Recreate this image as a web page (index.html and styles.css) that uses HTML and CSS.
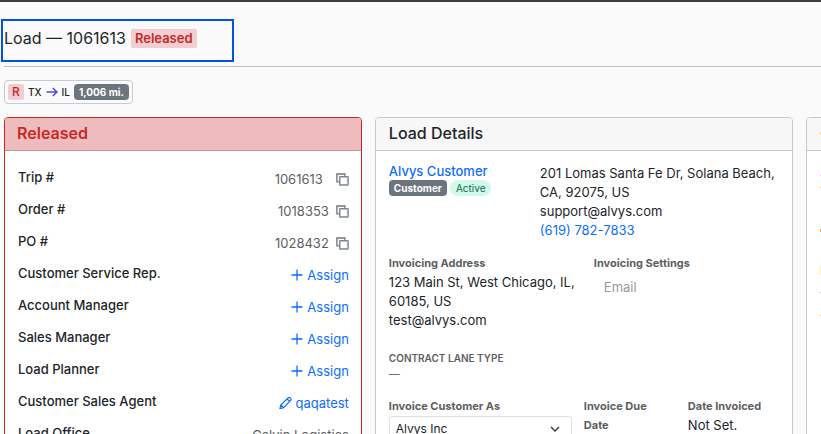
FILE: index.html
```html
<!DOCTYPE html>
<html lang="en">
<head>
  <meta charset="UTF-8" />
  <meta name="viewport" content="width=device-width, initial-scale=1" />
  <title>Load 1061613</title>
  <link rel="stylesheet" href="styles.css">
</head>
<body>
  <svg class="sprite" aria-hidden="true">
    <symbol id="icon-copy" viewBox="0 0 14 14">
      <path d="M3 9.5H1V1h8.5v2" fill="none" stroke="#6c757d" stroke-width="1.5" />
      <rect x="4" y="4" width="9" height="9" rx="0.6" fill="none" stroke="#7e868d" stroke-width="1.6" />
    </symbol>
    <symbol id="icon-plus" viewBox="0 0 12 12">
      <path d="M6 0.5v11M0.5 6h11" fill="none" stroke="currentColor" stroke-width="1.3" />
    </symbol>
    <symbol id="icon-pencil" viewBox="0 0 14 14">
      <path d="M1 13l1-4L10 1.4q.8-.8 1.7 0l.9.9q.8.8 0 1.7L5 12zM8.7 2.7l2.7 2.7M2 9l3 3" fill="none" stroke="currentColor" stroke-width="1.3" stroke-linejoin="round" />
    </symbol>
  </svg>

  <header class="page-header">
    <div class="title-box">
      <h1>Load — 1061613</h1>
      <span class="status">Released</span>
    </div>
  </header>

  <main>
    <div class="route">
      <span class="route-status">R</span>
      <span>TX</span>
      <svg class="arrow" viewBox="0 0 12 10" width="12" height="10"><path d="M0.5 5H11M6.8 1L11 5 6.8 9" fill="none" stroke="#4f46e5" stroke-width="1.5" /></svg>
      <span>IL</span>
      <span class="badge">1,006 mi.</span>
    </div>

    <div class="cards">
      <section class="card released">
        <h2>Released</h2>
        <dl class="info">
          <div><dt>Trip #</dt><dd><span class="trip">1061613</span><button class="copy" aria-label="Copy trip number"><svg><use href="#icon-copy" /></svg></button></dd></div>
          <div><dt>Order #</dt><dd>1018353<button class="copy" aria-label="Copy order number"><svg><use href="#icon-copy" /></svg></button></dd></div>
          <div><dt>PO #</dt><dd>1028432<button class="copy" aria-label="Copy PO number"><svg><use href="#icon-copy" /></svg></button></dd></div>
          <div><dt>Customer Service Rep.</dt><dd><a href="#"><svg class="plus"><use href="#icon-plus" /></svg>Assign</a></dd></div>
          <div><dt>Account Manager</dt><dd><a href="#"><svg class="plus"><use href="#icon-plus" /></svg>Assign</a></dd></div>
          <div><dt>Sales Manager</dt><dd><a href="#"><svg class="plus"><use href="#icon-plus" /></svg>Assign</a></dd></div>
          <div><dt>Load Planner</dt><dd><a href="#"><svg class="plus"><use href="#icon-plus" /></svg>Assign</a></dd></div>
          <div><dt>Customer Sales Agent</dt><dd><a href="#"><svg class="pencil"><use href="#icon-pencil" /></svg>qaqatest</a></dd></div>
          <div><dt>Load Office</dt><dd>Calvin Logistics</dd></div>
        </dl>
      </section>

      <section class="card details">
        <h2>Load Details</h2>
        <div class="card-body">
          <div class="customer">
            <div>
              <a class="customer-name" href="#">Alvys Customer</a>
              <div class="tags">
                <span class="badge">Customer</span>
                <span class="active">Active</span>
              </div>
            </div>
            <address>
              201 Lomas Santa Fe Dr, Solana Beach, CA, 92075, US<br>
              support@alvys.com<br>
              <a href="tel:6197827833">(619) 782-7833</a>
            </address>
          </div>

          <div class="invoicing">
            <div>
              <h3>Invoicing Address</h3>
              <p>123 Main St, West Chicago, IL, 60185, US<br>test@alvys.com</p>
            </div>
            <div>
              <h3>Invoicing Settings</h3>
              <p class="email">Email</p>
            </div>
          </div>

          <div class="lane">
            <h3>CONTRACT LANE TYPE</h3>
            <p>—</p>
          </div>

          <div class="invoice">
            <div>
              <label for="invoice-as">Invoice Customer As</label>
              <div class="select-wrap">
                <select id="invoice-as"><option>Alvys Inc</option></select>
                <svg viewBox="0 0 10 6"><path d="M1 1l4 4 4-4" fill="none" stroke="#343a40" stroke-width="1.4" /></svg>
              </div>
            </div>
            <div class="due">
              <h3>Invoice Due Date</h3>
            </div>
            <div>
              <h3>Date Invoiced</h3>
              <p>Not Set.</p>
            </div>
          </div>
        </div>
      </section>

      <section class="card activity">
        <div class="activity-head"><i class="mark yellow"></i></div>
        <div class="activity-body">
          <i class="mark pink"></i>
          <i class="mark orange"></i>
          <i class="mark amber"></i>
          <i class="mark lemon"></i>
          <i class="mark gray"></i>
          <i class="mark orange"></i>
        </div>
      </section>
    </div>
  </main>
</body>
</html>
```
FILE: styles.css
```css
* {
  box-sizing: border-box;
}

html, body {
  height: 100%;
  overflow: hidden;
}

body {
  margin: 0;
  border-top: 2px solid #3c3c3c;
  background: #fafafa;
  color: #212529;
  font-family: Inter, "Liberation Sans", sans-serif;
  font-size: 13px;
  line-height: 19px;
}

h1, h2, h3, p, dl, dd {
  margin: 0;
}

a {
  color: #0d6efd;
  text-decoration: none;
}

.sprite {
  display: none;
}

/* header */
.page-header {
  margin-left: 4px;
  padding: 17px 0 4px;
  border-bottom: 1px solid #bfbfbf;
}

.title-box {
  display: flex;
  align-items: center;
  gap: 5px;
  width: 233px;
  height: 43px;
  margin-left: -3px;
  padding: 0 1px 4px;
  border: 2px solid #0052e0;
}

h1 {
  font-size: 16px;
  font-weight: 400;
}

.status {
  padding: 0 4px;
  border-radius: 2px;
  background: #f1cfd0;
  color: #c62828;
  font-weight: 600;
}

main {
  padding: 13px 0 0 4px;
}

/* route */
.route {
  display: flex;
  align-items: center;
  gap: 4px;
  width: fit-content;
  height: 24px;
  padding: 0 3px;
  border: 1px solid #c9c8d6;
  border-radius: 4px;
  font-size: 10px;
  font-weight: 500;
  line-height: 16px;
}

.route-status {
  width: 16px;
  border-radius: 2px;
  background: #f1cfd0;
  color: #c62828;
  font-size: 12px;
  text-align: center;
}

.badge {
  padding: 0 5px;
  border-radius: 4px;
  background: #6c757d;
  color: #fff;
  font-size: 10px;
  font-weight: 700;
  line-height: 16px;
}

/* cards */
.cards {
  display: grid;
  grid-template-columns: 43.8% 51.2% 420px;
  column-gap: 13px;
  margin-top: 13px;
}

.card {
  min-height: 480px;
  border: 1px solid #c8c8c8;
  border-radius: 4px;
  background: #fff;
  overflow: hidden;
}

.card h2, .activity-head {
  height: 33px;
  padding: 0 13px;
  border-bottom: 1px solid #c8c8c8;
  background: #f7f7f7;
  font-size: 16px;
  font-weight: 500;
  line-height: 31px;
}

.released {
  border-color: #c62828;
}

.card.released h2 {
  padding-left: 12px;
  border-bottom-color: #c69597;
  background: #eebcbd;
  color: #c62828;
  font-weight: 600;
}

.info {
  padding: 12px 12px 0 13px;
}

.info div {
  display: flex;
  justify-content: space-between;
  height: 32px;
}

dt {
  padding-top: 5px;
  font-weight: 500;
}

dd, dd a {
  display: flex;
  align-items: center;
  color: #5c5f62;
}

dd a {
  gap: 4px;
  color: #0d6efd;
}

.trip {
  margin-right: 6px;
}

.copy {
  width: 13px;
  height: 13px;
  margin-left: 7px;
  padding: 0;
  border: 0;
  background: none;
}

.copy svg {
  display: block;
  width: 13px;
  height: 13px;
}

.plus {
  width: 12px;
  height: 12px;
}

.pencil {
  width: 13px;
  height: 14px;
}

/* load details */
.card-body {
  padding: 12px 13px;
}

.customer {
  display: grid;
  grid-template-columns: 151px 1fr;
}

.customer-name {
  display: block;
  font-weight: 500;
  line-height: 17px;
}

.tags {
  display: flex;
  gap: 3px;
}

.active {
  padding: 0 6px;
  border-radius: 8px;
  background: #d1f9e9;
  color: #0f6848;
  font-size: 10px;
  line-height: 16px;
}

address {
  padding-top: 1px;
  font-style: normal;
}

h3, label {
  display: block;
  color: #5c5f62;
  font-size: 11px;
  font-weight: 700;
  line-height: 19px;
}

.invoicing {
  display: grid;
  grid-template-columns: 193px 1fr;
  gap: 12px;
  margin-top: 14px;
}

.email {
  padding: 5px 10px;
  color: #999;
}

.lane {
  margin-top: 19px;
}

.lane h3 {
  font-size: 10px;
  font-weight: 600;
}

.lane p {
  color: #6c757d;
  font-size: 11px;
  line-height: 13px;
}

.invoice {
  display: grid;
  grid-template-columns: 183px 92px 1fr;
  gap: 12px;
  margin-top: 16px;
}

.due {
  padding-right: 16px;
}

.select-wrap {
  position: relative;
}

select {
  width: 100%;
  height: 25px;
  padding: 0 6px;
  border: 1px solid #dee2e6;
  border-radius: 3px;
  appearance: none;
  background: #fff;
  color: #212529;
  font: 12px Inter, sans-serif;
}

.select-wrap svg {
  position: absolute;
  top: 10px;
  right: 12px;
  width: 10px;
  height: 6px;
}

/* activity */
.mark {
  display: block;
  width: 12px;
  height: 3px;
}

.activity-head {
  padding-top: 14px;
}

.activity-body {
  display: grid;
  grid-template-rows: 12px 42px 41px 22px 23px 12px;
  padding: 24px 13px;
}

.yellow { background: #fbe08a; }
.pink { height: 1px; background: #e4b5ef; }
.orange { height: 1px; background: #f5b56a; }
.amber { background: #f2a93b; }
.lemon { height: 9px; margin-top: -4px; background: #fdf6a0; }
.gray { height: 1px; background: #bbb; }
```
